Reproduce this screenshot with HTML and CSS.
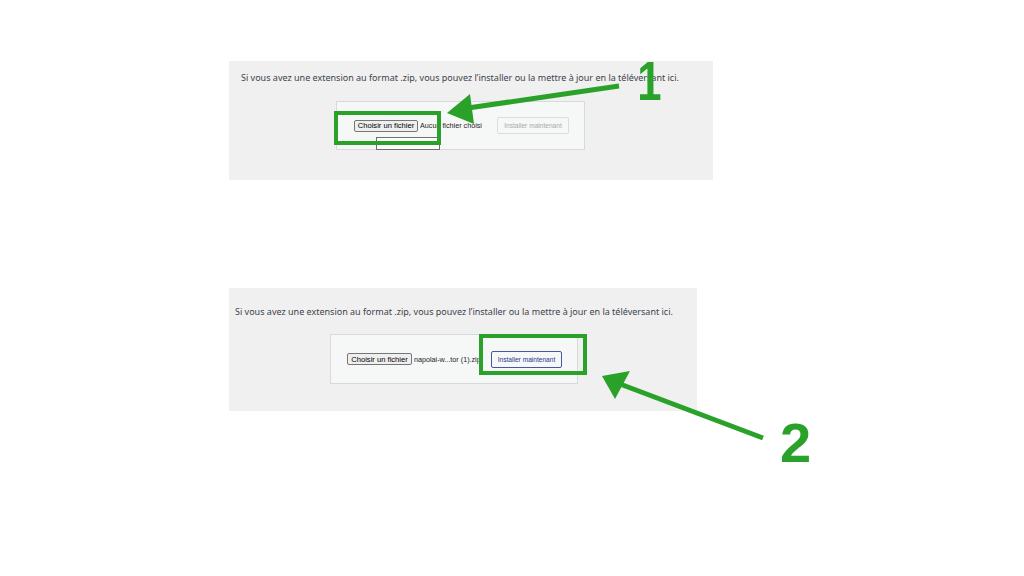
FILE: index.html
```html
<!DOCTYPE html>
<html lang="fr">
<head>
<meta charset="utf-8">
<title>Téléverser une extension</title>
<link rel="stylesheet" href="styles.css">
</head>
<body>
<main class="page">
  <section class="panel panel-one">
    <p class="lead">Si vous avez une extension au format .zip, vous pouvez l’installer ou la mettre à jour en la téléversant ici.</p>
    <div class="upload upload-one">
      <span class="file-btn">Choisir un fichier</span>
      <span class="fname">Aucun fichier choisi</span>
      <span class="install install-disabled">Installer maintenant</span>
      <span class="tip">Aucun fichier choisi</span>
    </div>
  </section>

  <section class="panel panel-two">
    <p class="lead">Si vous avez une extension au format .zip, vous pouvez l’installer ou la mettre à jour en la téléversant ici.</p>
    <div class="upload upload-two">
      <span class="file-btn">Choisir un fichier</span>
      <span class="fname">napolai-w...tor (1).zip</span>
      <span class="install install-active">Installer maintenant</span>
    </div>
  </section>
</main>

<svg class="annotations" width="1024" height="576" viewBox="0 0 1024 576" aria-hidden="true">
  <g fill="none" stroke="#2aa22a" stroke-width="4">
    <rect x="336" y="113" width="103" height="30"/>
    <rect x="481" y="336" width="104" height="37"/>
  </g>
  <g stroke="#2aa22a" stroke-width="5" stroke-linecap="butt">
    <line x1="619" y1="86" x2="468" y2="108"/>
    <line x1="763" y1="438" x2="620" y2="384"/>
  </g>
  <g fill="#2aa22a">
    <polygon points="447,113 470,94 474,124"/>
    <polygon points="602,376 630,371 615,399"/>
  </g>
  <g class="num" fill="#2aa22a">
    <text class="one" x="0" y="0" text-anchor="middle" transform="translate(649.5 100) scale(0.78 1)">1</text>
    <text x="795.5" y="462" text-anchor="middle">2</text>
  </g>
</svg>
</body>
</html>
```

FILE: styles.css
```css
html, body {
  margin: 0;
  padding: 0;
  background: #ffffff;
}

body {
  width: 1024px;
  height: 576px;
  overflow: hidden;
  position: relative;
  font-family: "Noto Sans", "Open Sans", "Liberation Sans", sans-serif;
  color: #3c434a;
}

.page {
  padding: 61px 0 0 229px;
  display: flex;
  flex-direction: column;
}

.panel {
  background: #f0f0f1;
  box-sizing: border-box;
  display: flex;
  flex-direction: column;
}

.panel-one {
  width: 484px;
  height: 119px;
  padding: 11px 0 0 12px;
}

.panel-two {
  width: 468px;
  height: 123px;
  margin-top: 108px;
  padding: 18px 0 0 6px;
}

.lead {
  margin: 0;
  font-size: 9px;
  line-height: 12px;
  white-space: nowrap;
}

.upload {
  position: relative;
  box-sizing: border-box;
  background: #f6f7f7;
  border: 1px solid #d8d9db;
  display: flex;
  align-items: center;
  font-family: "Liberation Sans", Arial, sans-serif;
}

.upload-one {
  width: 249px;
  height: 49px;
  margin: 17px 0 0 95px;
  padding: 0 0 0 17px;
}

.upload-two {
  width: 248px;
  height: 50px;
  margin: 16px 0 0 95px;
  padding: 0 0 0 16px;
}

.file-btn {
  box-sizing: border-box;
  height: 12px;
  width: 64px;
  display: flex;
  align-items: center;
  justify-content: center;
  background: #efefef;
  border: 1px solid #767676;
  border-radius: 2px;
  font-size: 7.6px;
  color: #000;
  white-space: nowrap;
}

.upload-two .file-btn {
  width: 65px;
}

.fname {
  width: 77px;
  margin-left: 2px;
  font-size: 7.2px;
  color: #1d1d1d;
  white-space: nowrap;
  overflow: hidden;
}

.install {
  box-sizing: border-box;
  height: 17px;
  display: flex;
  align-items: center;
  justify-content: center;
  border-radius: 2px;
  font-size: 6.6px;
  white-space: nowrap;
}

.install-disabled {
  width: 72px;
  border: 1px solid #dcdcde;
  background: #f6f7f7;
  color: #a7aaad;
}

.install-active {
  width: 71px;
  border: 1px solid #4a55a2;
  background: #f6f7f7;
  color: #283593;
}

.tip {
  position: absolute;
  left: 39px;
  top: 35px;
  width: 64px;
  height: 13px;
  box-sizing: border-box;
  border: 1px solid #6e6e6e;
  background: #ffffff;
  color: #cfcfcf;
  font-size: 6px;
  padding: 2px 0 0 7px;
  white-space: nowrap;
  overflow: hidden;
}

.annotations {
  position: absolute;
  left: 0;
  top: 0;
  pointer-events: none;
}

.num text {
  font-family: "Liberation Sans", Arial, sans-serif;
  font-weight: 700;
  font-size: 56px;
}
```
